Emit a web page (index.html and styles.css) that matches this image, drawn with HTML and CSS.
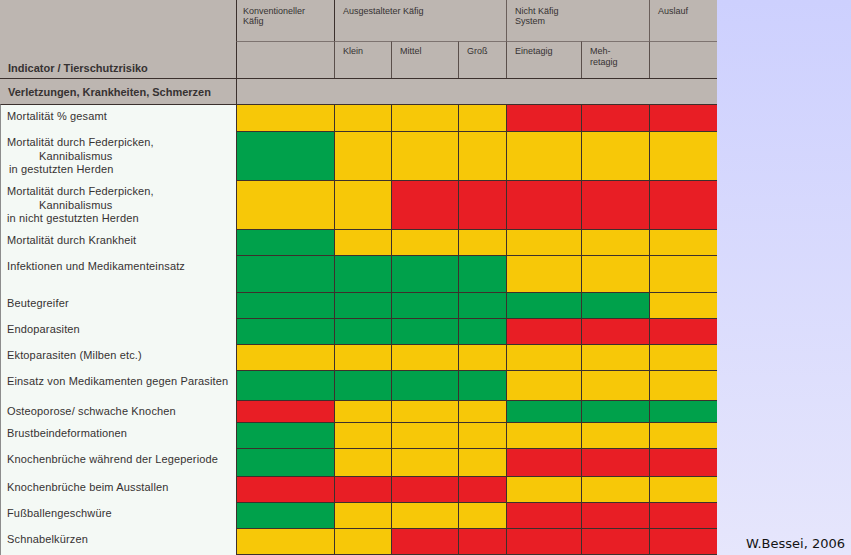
FILE: index.html
```html
<!DOCTYPE html>
<html lang="de">
<head>
<meta charset="utf-8">
<title>Tierschutzrisiko</title>
<link rel="stylesheet" href="styles.css">
</head>
<body>
<div class="page">
  <div class="chart">
    <div class="h-ind">Indicator / Tierschutzrisiko</div>
    <div class="h-grp first">Konventioneller<br>Käfig</div>
    <div class="h-grp span3">Ausgestalteter Käfig</div>
    <div class="h-grp span2">Nicht Käfig<br>System</div>
    <div class="h-grp">Auslauf</div>

    <div class="h-sub first"></div>
    <div class="h-sub">Klein</div>
    <div class="h-sub">Mittel</div>
    <div class="h-sub">Groß</div>
    <div class="h-sub">Einetagig</div>
    <div class="h-sub">Meh-<br>retagig</div>
    <div class="h-sub"></div>

    <div class="cat">Verletzungen, Krankheiten, Schmerzen</div>
    <div class="cat-fill"></div>

    <div class="lab top">Mortalität % gesamt</div>
    <div class="c y"></div><div class="c y"></div><div class="c y"></div><div class="c y"></div><div class="c r"></div><div class="c r"></div><div class="c r"></div>

    <div class="lab">Mortalität durch Federpicken,<br><span class="ind">Kannibalismus</span><br><span class="ind1">in gestutzten Herden</span></div>
    <div class="c g"></div><div class="c y"></div><div class="c y"></div><div class="c y"></div><div class="c y"></div><div class="c y"></div><div class="c y"></div>

    <div class="lab">Mortalität durch Federpicken,<br><span class="ind">Kannibalismus</span><br>in nicht gestutzten Herden</div>
    <div class="c y"></div><div class="c y"></div><div class="c r"></div><div class="c r"></div><div class="c r"></div><div class="c r"></div><div class="c r"></div>

    <div class="lab">Mortalität durch Krankheit</div>
    <div class="c g"></div><div class="c y"></div><div class="c y"></div><div class="c y"></div><div class="c y"></div><div class="c y"></div><div class="c y"></div>

    <div class="lab">Infektionen und Medikamenteinsatz</div>
    <div class="c g"></div><div class="c g"></div><div class="c g"></div><div class="c g"></div><div class="c y"></div><div class="c y"></div><div class="c y"></div>

    <div class="lab">Beutegreifer</div>
    <div class="c g"></div><div class="c g"></div><div class="c g"></div><div class="c g"></div><div class="c g"></div><div class="c g"></div><div class="c y"></div>

    <div class="lab">Endoparasiten</div>
    <div class="c g"></div><div class="c g"></div><div class="c g"></div><div class="c g"></div><div class="c r"></div><div class="c r"></div><div class="c r"></div>

    <div class="lab">Ektoparasiten (Milben etc.)</div>
    <div class="c y"></div><div class="c y"></div><div class="c y"></div><div class="c y"></div><div class="c y"></div><div class="c y"></div><div class="c y"></div>

    <div class="lab">Einsatz von Medikamenten gegen Parasiten</div>
    <div class="c g"></div><div class="c g"></div><div class="c g"></div><div class="c g"></div><div class="c y"></div><div class="c y"></div><div class="c y"></div>

    <div class="lab">Osteoporose/ schwache Knochen</div>
    <div class="c r"></div><div class="c y"></div><div class="c y"></div><div class="c y"></div><div class="c g"></div><div class="c g"></div><div class="c g"></div>

    <div class="lab">Brustbeindeformationen</div>
    <div class="c g"></div><div class="c y"></div><div class="c y"></div><div class="c y"></div><div class="c y"></div><div class="c y"></div><div class="c y"></div>

    <div class="lab">Knochenbrüche während der Legeperiode</div>
    <div class="c g"></div><div class="c y"></div><div class="c y"></div><div class="c y"></div><div class="c r"></div><div class="c r"></div><div class="c r"></div>

    <div class="lab">Knochenbrüche beim Ausstallen</div>
    <div class="c r"></div><div class="c r"></div><div class="c r"></div><div class="c r"></div><div class="c y"></div><div class="c y"></div><div class="c y"></div>

    <div class="lab">Fußballengeschwüre</div>
    <div class="c g"></div><div class="c y"></div><div class="c y"></div><div class="c y"></div><div class="c r"></div><div class="c r"></div><div class="c r"></div>

    <div class="lab">Schnabelkürzen</div>
    <div class="c y last"></div><div class="c y last"></div><div class="c r last"></div><div class="c r last"></div><div class="c r last"></div><div class="c r last"></div><div class="c r last"></div>
  </div>
  <aside class="side">
    <span class="credit">W.Bessei, 2006</span>
  </aside>
</div>
</body>
</html>
```

FILE: styles.css
```css
* { box-sizing: border-box; }

html, body {
  margin: 0;
  padding: 0;
}

body {
  width: 851px;
  height: 555px;
  overflow: hidden;
  background: linear-gradient(#cdd0fe, #e6e6fc);
}

.page {
  display: flex;
  width: 851px;
  height: 555px;
}

.chart {
  display: grid;
  grid-template-columns: 236px 98px 57px 67px 48px 75px 68px 68px;
  grid-template-rows: 41px 37px 26px 27px 49px 49px 26px 37px 26px 26px 26px 30px 22px 26px 28px 26px 26px 27px;
  width: 717px;
  height: 555px;
  font-family: "Liberation Sans", Arial, sans-serif;
  color: #363232;
}

.h-ind {
  grid-row: 1 / 3;
  background: #bdb6b1;
  font-weight: bold;
  font-size: 11px;
  line-height: 14px;
  padding: 0 0 3px 8px;
  display: flex;
  align-items: flex-end;
}

.h-grp {
  background: #bdb6b1;
  border-left: 1px solid #6a5f5b;
  font-size: 9px;
  line-height: 10px;
  padding: 6px 0 0 8px;
}

.h-grp.first {
  border-left-color: #3b302d;
  padding-left: 6px;
}

.h-grp.span3 { grid-column: span 3; border-left-color: #3b302d; }
.h-grp.span2 { grid-column: span 2; }

.h-sub {
  background: #bdb6b1;
  border-left: 1px solid #5a4f4b;
  border-top: 1px solid #7d7370;
  font-size: 9px;
  line-height: 11px;
  padding: 4px 0 0 8px;
}

.h-sub.first { border-left-color: #3b302d; }

.cat {
  background: #bdb6b1;
  border-top: 1px solid #3b302d;
  font-weight: bold;
  font-size: 11px;
  line-height: 14px;
  padding: 0 0 0 8px;
  display: flex;
  align-items: center;
}

.cat-fill {
  grid-column: span 7;
  background: #bdb6b1;
  border-top: 1px solid #3b302d;
  border-left: 1px solid #3b302d;
}

.lab {
  background: #f4f9f5;
  border-left: 1px solid #8d8d8d;
  font-size: 11px;
  letter-spacing: 0.15px;
  line-height: 13.5px;
  padding: 5px 0 0 6px;
  white-space: nowrap;
}

.lab.top { border-top: 1px solid #3b302d; }

.ind { padding-left: 32px; }
.ind1 { padding-left: 2px; }

.c {
  border-top: 1px solid #3d302c;
  border-left: 1px solid #3d302c;
}

.c.last { border-bottom: 1px solid #3d302c; }

.y { background: #f7c808; }
.g { background: #00a14b; }
.r { background: #e81e25; }

.side {
  flex: 1;
  display: flex;
  justify-content: flex-end;
  align-items: flex-end;
  padding: 0 6px 4px 0;
}

.credit {
  font-family: "DejaVu Sans", Verdana, sans-serif;
  font-size: 13px;
  line-height: 15px;
  color: #141414;
}
```
